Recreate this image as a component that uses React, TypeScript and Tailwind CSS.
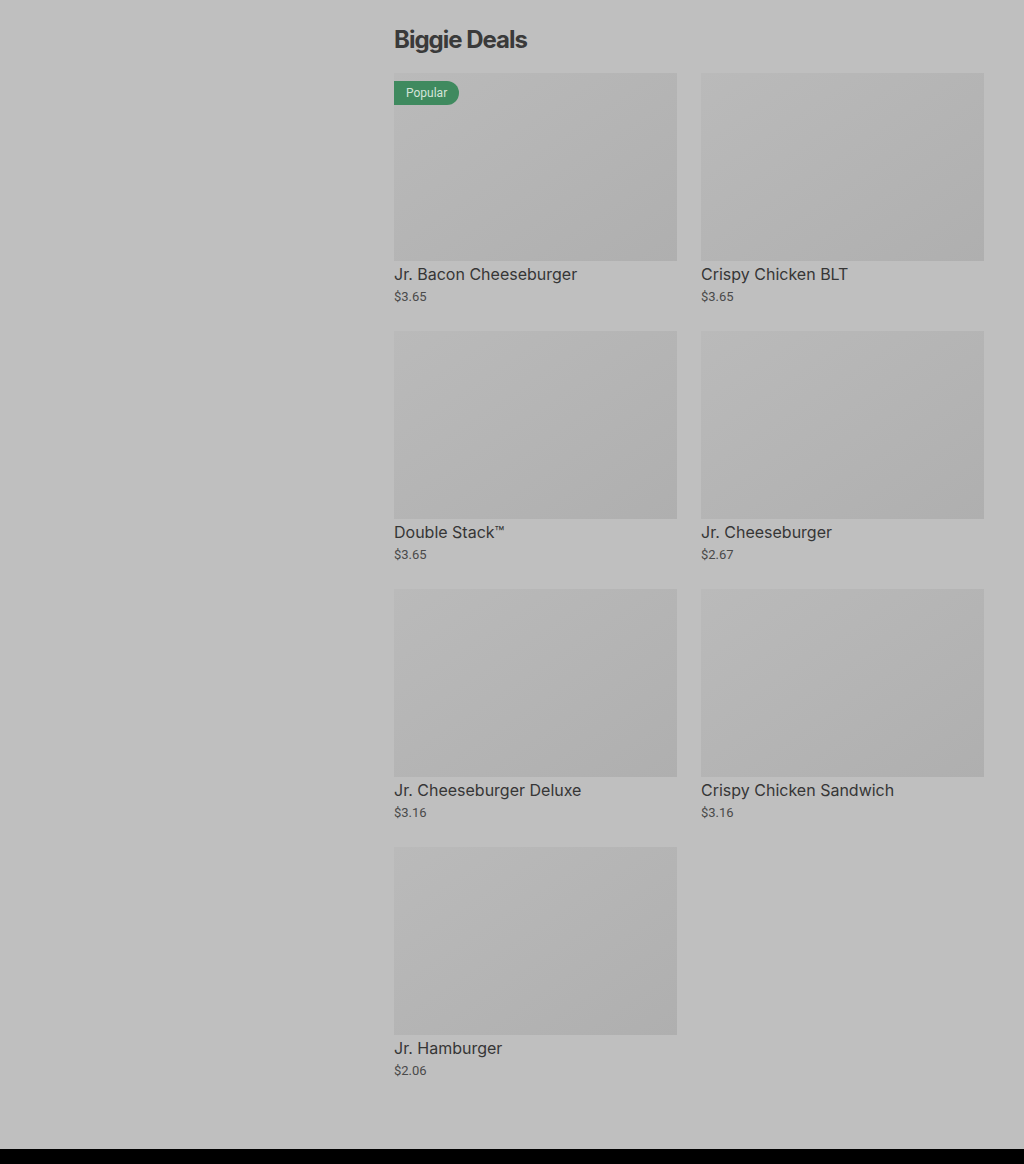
const items = [
  { name: "Jr. Bacon Cheeseburger", price: "$3.65", popular: true },
  { name: "Crispy Chicken BLT", price: "$3.65" },
  { name: "Double Stack™", price: "$3.65" },
  { name: "Jr. Cheeseburger", price: "$2.67" },
  { name: "Jr. Cheeseburger Deluxe", price: "$3.16" },
  { name: "Crispy Chicken Sandwich", price: "$3.16" },
  { name: "Jr. Hamburger", price: "$2.06" },
];

function ItemCard({ item }: { item: { name: string; price: string; popular?: boolean } }) {
  return (
    <div className="flex flex-col">
      <div className="relative h-[188px] bg-gradient-to-br from-[#bababa] to-[#afafaf]">
        {item.popular && (
          <span className="absolute left-0 top-2 h-6 px-3 flex items-center rounded-r-full bg-[#3f8a5f] text-[#d4e4da] text-[12px]">
            Popular
          </span>
        )}
      </div>
      <div className="mt-px text-[16px] leading-6 font-normal text-[#363636]" style={{ fontFamily: "Inter, sans-serif" }}>
        {item.name}
      </div>
      <div className="mt-px text-[13px] leading-5 text-[#4a4a4a]">{item.price}</div>
    </div>
  );
}

export default function App() {
  return (
    <div className="min-h-[1164px] bg-[#bfbfbf] flex flex-col" style={{ fontFamily: "Roboto, 'Noto Sans', sans-serif" }}>
      <div className="flex flex-1">
        <div className="w-[394px] shrink-0" />
        <main className="w-[590px] pt-6 pb-[68px]">
          <h2 className="text-[24px] leading-8 font-bold tracking-[-1px] text-[#3a3a3a] mb-[17px]" style={{ fontFamily: "Inter, sans-serif" }}>
            Biggie Deals
          </h2>
          <div className="grid grid-cols-2 gap-x-6 gap-y-6">
            {items.map((item) => (
              <ItemCard key={item.name} item={item} />
            ))}
          </div>
        </main>
      </div>
      <div className="h-[15px] bg-black" />
    </div>
  );
}
